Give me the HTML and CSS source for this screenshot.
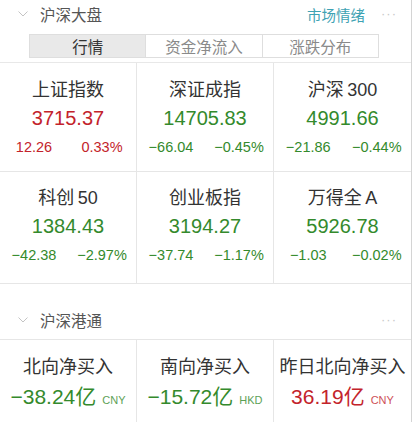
FILE: index.html
```html
<!DOCTYPE html>
<html lang="zh">
<head>
<meta charset="utf-8">
<link rel="stylesheet" href="styles.css">
</head>
<body>
<div class="panel">
  <div class="sec-head">
    <svg class="chev" width="10" height="6" viewBox="0 0 10 6"><path d="M0.5 0.5 L5 5 L9.5 0.5" fill="none" stroke="#c4c4c4" stroke-width="1"/></svg>
    <span class="sec-title">沪深大盘</span>
    <span class="spacer"></span>
    <span class="sec-link">市场情绪</span>
    <span class="more">···</span>
  </div>
  <div class="tabs">
    <div class="tab active">行情</div>
    <div class="tab">资金净流入</div>
    <div class="tab">涨跌分布</div>
  </div>
  <div class="grid">
    <div class="cell">
      <div class="name">上证指数</div>
      <div class="value up">3715.37</div>
      <div class="chg up"><span>12.26</span><span>0.33%</span></div>
    </div>
    <div class="cell">
      <div class="name">深证成指</div>
      <div class="value down">14705.83</div>
      <div class="chg down"><span>−66.04</span><span>−0.45%</span></div>
    </div>
    <div class="cell">
      <div class="name">沪深<span class="thin"> </span>300</div>
      <div class="value down">4991.66</div>
      <div class="chg down"><span>−21.86</span><span>−0.44%</span></div>
    </div>
    <div class="cell row2">
      <div class="name">科创<span class="thin"> </span>50</div>
      <div class="value down">1384.43</div>
      <div class="chg down"><span>−42.38</span><span>−2.97%</span></div>
    </div>
    <div class="cell row2">
      <div class="name">创业板指</div>
      <div class="value down">3194.27</div>
      <div class="chg down"><span>−37.74</span><span>−1.17%</span></div>
    </div>
    <div class="cell row2">
      <div class="name">万得全<span class="thin"> </span>A</div>
      <div class="value down">5926.78</div>
      <div class="chg down"><span>−1.03</span><span>−0.02%</span></div>
    </div>
  </div>
  <div class="sec-head sec2">
    <svg class="chev" width="10" height="6" viewBox="0 0 10 6"><path d="M0.5 0.5 L5 5 L9.5 0.5" fill="none" stroke="#c4c4c4" stroke-width="1"/></svg>
    <span class="sec-title">沪深港通</span>
    <span class="spacer"></span>
    <span class="more">···</span>
  </div>
  <div class="grid grid2">
    <div class="cell">
      <div class="name">北向净买入</div>
      <div class="value down">−38.24亿<span class="cur">CNY</span></div>
    </div>
    <div class="cell">
      <div class="name">南向净买入</div>
      <div class="value down">−15.72亿<span class="cur">HKD</span></div>
    </div>
    <div class="cell">
      <div class="name">昨日北向净买入</div>
      <div class="value up">36.19亿<span class="cur">CNY</span></div>
    </div>
  </div>
</div>
</body>
</html>
```

FILE: styles.css
```css
html, body {
  margin: 0;
  padding: 0;
  background: #fff;
}
body {
  font-family: "Liberation Sans", "Noto Sans CJK SC", sans-serif;
  color: #333;
  width: 415px;
  height: 422px;
  overflow: hidden;
}
.panel {
  width: 411px;
  border-right: 1px solid #d4d4d4;
  min-height: 422px;
}
.sec-head {
  display: flex;
  align-items: center;
  height: 28px;
  padding-left: 18px;
  padding-right: 14px;
}
.chev {
  margin-right: 12px;
}
.sec-title {
  font-family: "Noto Sans CJK SC", sans-serif;
  font-size: 15.5px;
  color: #555;
  line-height: 20px;
}
.spacer {
  flex: 1;
}
.sec-link {
  font-family: "Noto Sans CJK SC", sans-serif;
  font-size: 14.5px;
  color: #3ea2b3;
  margin-right: 16px;
}
.more {
  font-size: 13px;
  color: #c8c8c8;
  letter-spacing: 1px;
  line-height: 20px;
}
.tabs {
  display: flex;
  margin: 6px 0 0 29px;
  width: 350px;
  height: 24px;
  box-sizing: border-box;
  border: 1px solid #dedede;
}
.tab {
  flex: 1;
  display: flex;
  align-items: center;
  justify-content: center;
  font-family: "Noto Sans CJK SC", sans-serif;
  font-size: 15.5px;
  color: #8a8a8a;
  border-left: 1px solid #dedede;
}
.tab:first-child {
  border-left: none;
}
.tab.active {
  background: #e9e9e9;
  color: #333;
}
.grid {
  display: grid;
  grid-template-columns: 137px 137px 137px;
  margin-top: 4px;
  border-top: 1px solid #e8e8e8;
}
.cell {
  box-sizing: border-box;
  height: 109px;
  padding-top: 15px;
  border-right: 1px solid #e6e6e6;
  border-bottom: 1px solid #e6e6e6;
  text-align: center;
}
.cell:nth-child(3n) {
  border-right: none;
}
.cell.row2 {
  height: 112px;
  padding-top: 14px;
}
.name {
  font-family: "Liberation Sans", "Noto Sans CJK SC", sans-serif;
  font-size: 18px;
  line-height: 24px;
  height: 24px;
  color: #333;
}
.thin {
  font-size: 12px;
  line-height: 0;
}
.value {
  margin-top: 2px;
  font-size: 20px;
  line-height: 28px;
}
.chg {
  display: flex;
  margin-top: 5px;
  font-size: 14.5px;
  line-height: 20px;
}
.chg span {
  flex: 1;
  text-align: center;
}
.up {
  color: #c3232b;
}
.down {
  color: #348a2c;
}
.sec2 {
  height: 56px;
  box-sizing: border-box;
  align-items: flex-end;
  padding-bottom: 9px;
  border-bottom: 1px solid #e6e6e6;
}
.sec2 .chev {
  margin-bottom: 7px;
}
.grid2 {
  margin-top: 0;
  border-top: none;
}
.grid2 .cell {
  height: 90px;
}
.grid2 .value {
  margin-top: 4px;
  font-family: "Liberation Sans", "Noto Sans CJK SC", sans-serif;
  font-size: 21px;
}
.cur {
  font-size: 11px;
  margin-left: 6px;
  opacity: 0.8;
}
```
